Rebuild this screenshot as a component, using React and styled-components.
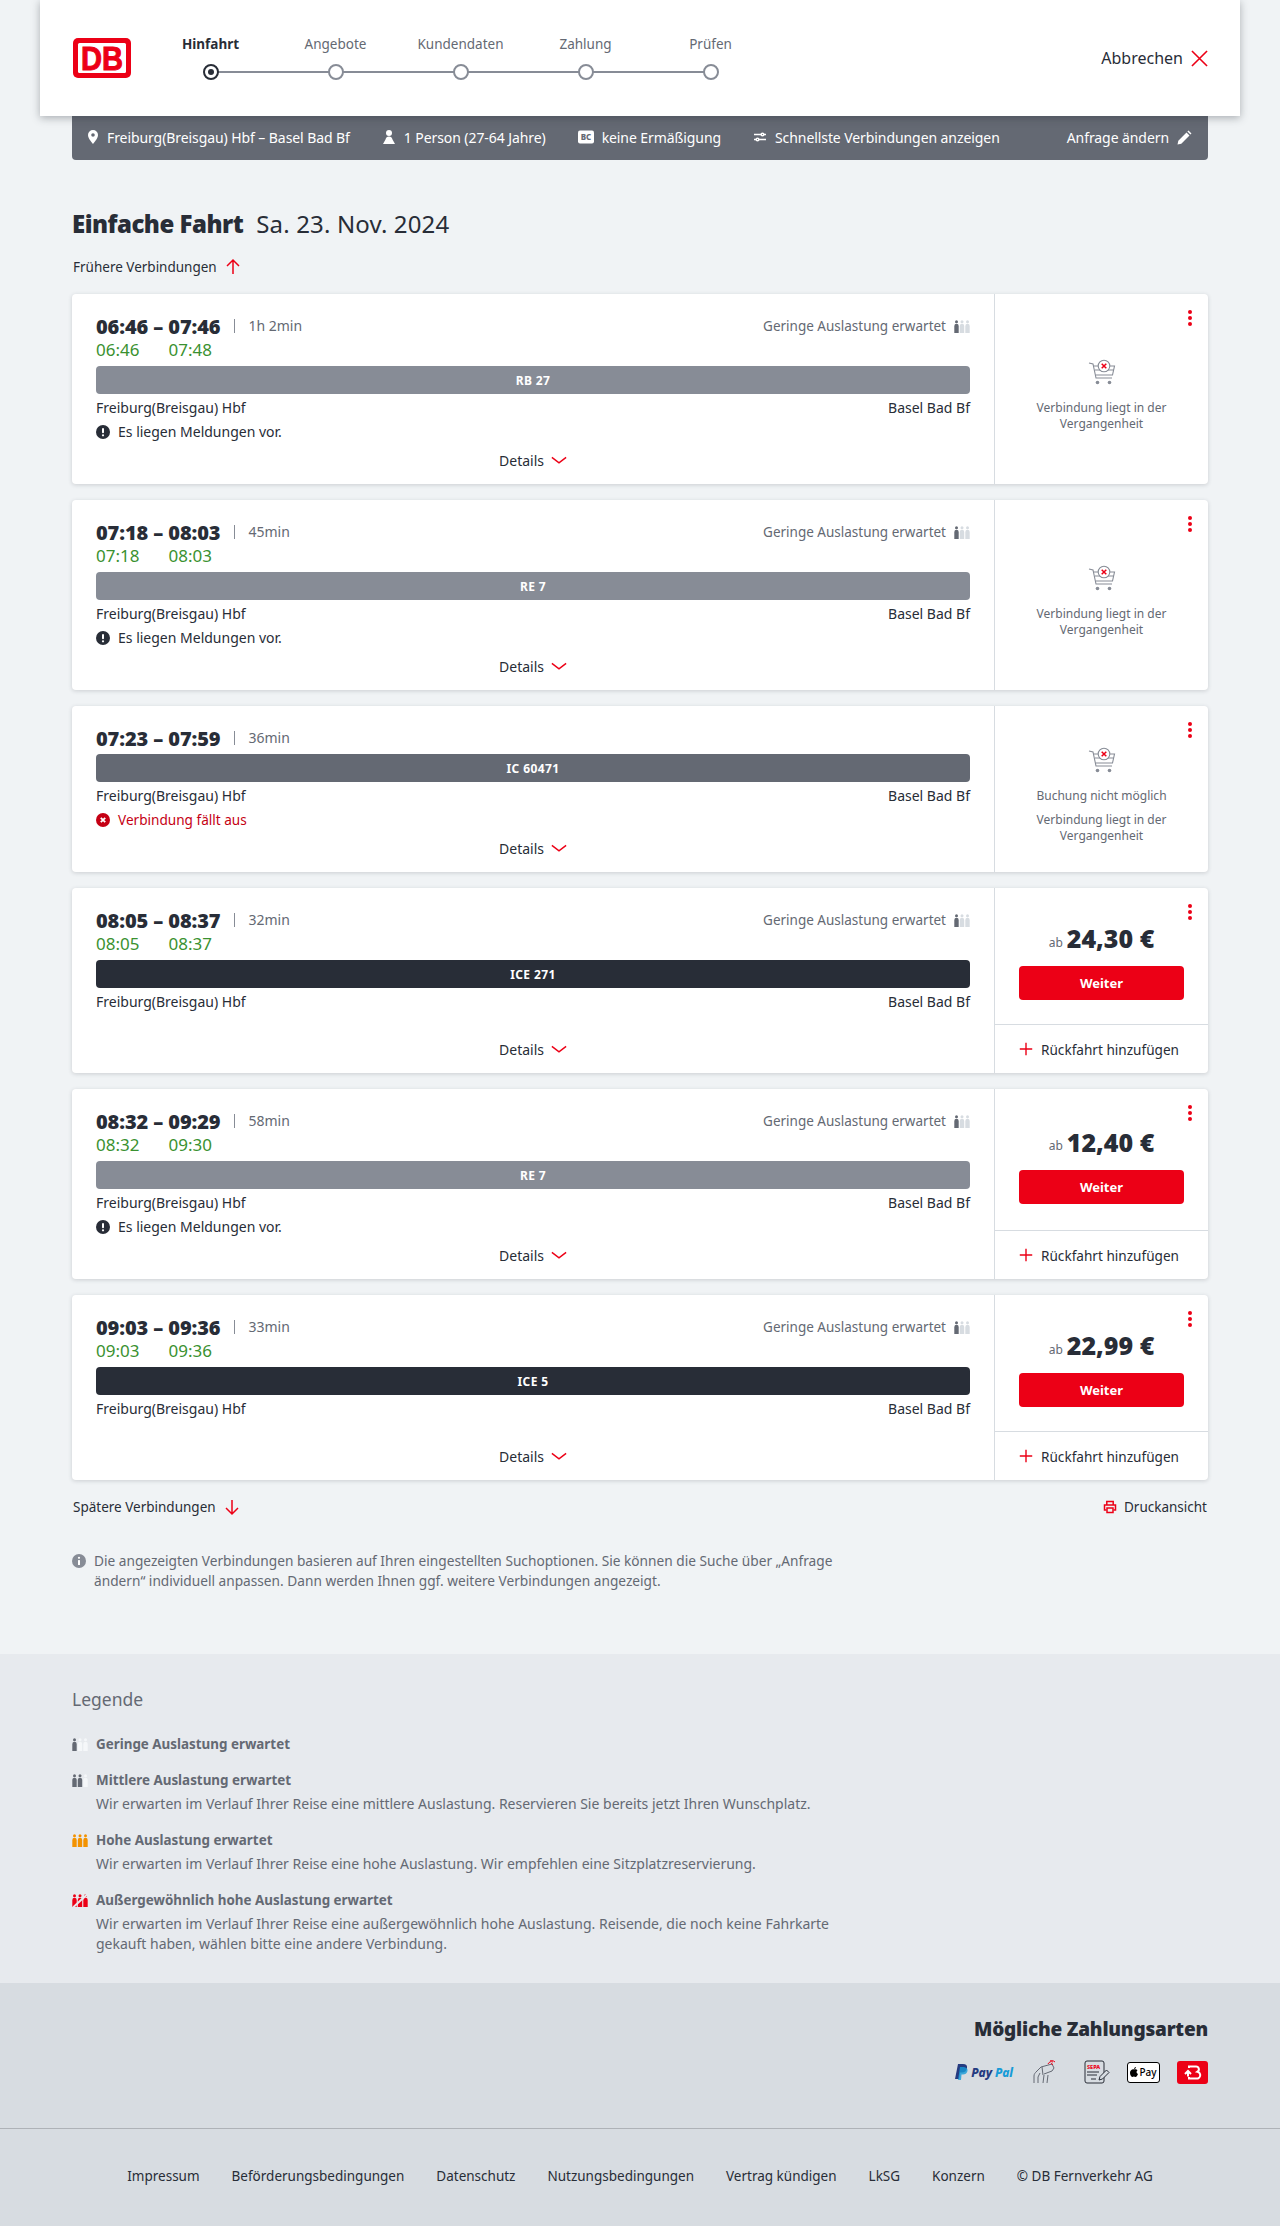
import styled, { createGlobalStyle } from "styled-components";

const colors = {
  page: "#f0f3f5",
  legend: "#e7eaee",
  pay: "#d7dce1",
  text: "#282d37",
  muted: "#646973",
  grey: "#878c96",
  line: "#d7dce1",
  red: "#ec0016",
  darkRed: "#c50014",
  green: "#3a9130",
};

const Global = createGlobalStyle`
  html, body { margin: 0; padding: 0; background: ${colors.page}; }
  body { font-family: "Noto Sans", "Open Sans", sans-serif; color: ${colors.text}; font-size: 14px; }
  * { box-sizing: border-box; }
`;

const Header = styled.header`
  width: 1200px;
  height: 116px;
  margin: 0 auto;
  padding: 0 32px 0 33px;
  background: #fff;
  display: flex;
  align-items: center;
  position: relative;
  z-index: 2;
  box-shadow: 0 2px 8px rgba(40, 45, 55, 0.35);
`;

const Logo = styled.svg`
  width: 58px;
  height: 40px;
  flex: none;
  margin-right: 17px;
`;

const Stepper = styled.ol`
  display: flex;
  list-style: none;
  margin: 0 0 2px;
  padding: 0;
`;

const Step = styled.li`
  width: 125px;
  position: relative;
  display: flex;
  flex-direction: column;
  align-items: center;
  gap: 10px;
  font-size: 13.5px;
  line-height: 20px;
  color: ${({ $active }) => ($active ? colors.text : colors.muted)};
  font-weight: ${({ $active }) => ($active ? 700 : 400)};
  &:not(:last-child)::after {
    content: "";
    position: absolute;
    left: 62px;
    width: 125px;
    top: 37px;
    height: 2px;
    background: ${colors.grey};
  }
`;

const Dot = styled.span`
  width: 16px;
  height: 16px;
  border-radius: 50%;
  background: #fff;
  border: 2px solid ${({ $active }) => ($active ? colors.text : colors.grey)};
  position: relative;
  z-index: 1;
  display: flex;
  align-items: center;
  justify-content: center;
  &::before {
    content: "";
    width: 6px;
    height: 6px;
    border-radius: 50%;
    background: ${({ $active }) => ($active ? colors.text : "transparent")};
  }
`;

const Cancel = styled.div`
  margin-left: auto;
  display: flex;
  align-items: center;
  gap: 8px;
  font-size: 16px;
  color: ${colors.text};
`;

const Wrap = styled.div`
  width: 1136px;
  margin: 0 auto;
`;

const QueryBar = styled.div`
  height: 44px;
  background: ${colors.muted};
  border-radius: 0 0 4px 4px;
  color: #fff;
  padding: 0 16px 2px 15px;
  display: flex;
  align-items: center;
  gap: 32px;
  font-size: 14px;
  letter-spacing: -0.08px;
`;

const QueryItem = styled.span`
  display: flex;
  align-items: center;
  gap: 8px;
  white-space: nowrap;
  &:last-child { margin-left: auto; }
`;

const Heading = styled.h1`
  margin: 48px 0 0;
  font-size: 24px;
  line-height: 32px;
  font-weight: 400;
  display: flex;
  gap: 13px;
  letter-spacing: 0.15px;
  b { font-weight: 900; letter-spacing: -0.5px; }
`;

const MoreRow = styled.div`
  display: flex;
  align-items: center;
  justify-content: space-between;
  height: 24px;
  margin-top: ${({ $top }) => $top}px;
  padding: 0 1px 1px;
  font-size: 13.5px;
`;

const MoreLink = styled.span`
  display: flex;
  align-items: center;
  gap: 7px;
`;

const CardList = styled.div`
  margin-top: 15px;
  display: flex;
  flex-direction: column;
  gap: 16px;
`;

const Card = styled.article`
  display: grid;
  grid-template-columns: 922px 214px;
  background: #fff;
  border-radius: 4px;
  box-shadow: 0 1px 4px rgba(40, 45, 55, 0.18);
`;

const Main = styled.div`
  padding: 20px 24px 11px;
  display: flex;
  flex-direction: column;
`;

const TimeRow = styled.div`
  display: flex;
  align-items: center;
  height: 24px;
  margin-bottom: 1px;
`;

const Times = styled.strong`
  font-size: 20px;
  font-weight: 900;
  letter-spacing: -0.1px;
`;

const Duration = styled.span`
  margin-left: 14px;
  padding-left: 13px;
  font-size: 14px;
  color: ${colors.muted};
  line-height: 14px;
  border-left: 1px solid ${colors.grey};
`;

const Load = styled.span`
  margin-left: auto;
  display: flex;
  align-items: center;
  gap: 8px;
  font-size: 13.5px;
  color: ${colors.muted};
`;

const ActualRow = styled.div`
  height: 22px;
  margin-bottom: 2px;
  display: flex;
  gap: 29px;
  color: ${colors.green};
  font-size: 17px;
  line-height: 22px;
`;

const TrainBar = styled.div`
  height: 28px;
  margin-top: 3px;
  border-radius: 4px;
  background: ${({ $tone }) => $tone};
  color: #fff;
  font-size: 12px;
  font-weight: 700;
  letter-spacing: 0.4px;
  display: flex;
  align-items: center;
  justify-content: center;
`;

const Stations = styled.div`
  margin-top: 2px;
  display: flex;
  justify-content: space-between;
  font-size: 14px;
  line-height: 24px;
`;

const Notice = styled.div`
  display: flex;
  align-items: center;
  gap: 8px;
  font-size: ${({ $alert }) => ($alert ? 13.6 : 14)}px;
  line-height: 24px;
  color: ${({ $alert }) => ($alert ? colors.darkRed : colors.text)};
`;

const Details = styled.div`
  margin-top: auto;
  padding-top: 5px;
  display: flex;
  justify-content: center;
  align-items: center;
  gap: 7px;
  font-size: 14px;
  line-height: 24px;
`;

const Side = styled.div`
  border-left: 1px solid ${colors.line};
  position: relative;
  display: flex;
  flex-direction: column;
`;

const Kebab = styled.span`
  position: absolute;
  right: 16px;
  top: 16px;
  display: flex;
  flex-direction: column;
  gap: 2px;
  i {
    width: 4px;
    height: 4px;
    border-radius: 50%;
    background: ${colors.red};
  }
`;

const Unavailable = styled.div`
  flex: 1;
  padding: 13px 24px 0;
  display: flex;
  flex-direction: column;
  align-items: center;
  justify-content: center;
  text-align: center;
  font-size: 12px;
  line-height: 16px;
  color: ${colors.muted};
`;

const UnavailableNote = styled.p`
  margin: ${({ $top }) => $top}px 0 0;
`;

const Offer = styled.div`
  flex: 1;
  padding: 32px 24px 24px;
  display: flex;
  flex-direction: column;
  justify-content: center;
  align-items: center;
`;

const Price = styled.div`
  height: 36px;
  display: flex;
  align-items: center;
  gap: 4px;
  font-size: 25px;
  font-weight: 900;
  small {
    font-size: 12px;
    font-weight: 400;
    color: ${colors.muted};
    margin-top: 8px;
  }
`;

const Button = styled.button`
  width: 165px;
  height: 34px;
  margin-top: 10px;
  border: 0;
  border-radius: 4px;
  background: ${colors.red};
  color: #fff;
  font: 700 13px "Noto Sans", sans-serif;
`;

const Return = styled.div`
  height: 49px;
  padding-left: 24px;
  border-top: 1px solid ${colors.line};
  display: flex;
  align-items: center;
  gap: 8px;
  font-size: 13.6px;
`;

const Info = styled.p`
  margin: 32px 0 0;
  width: 770px;
  position: relative;
  padding-left: 22px;
  font-size: 13.7px;
  line-height: 20px;
  color: ${colors.muted};
  svg {
    position: absolute;
    left: 0;
    top: 3px;
  }
`;

const Legend = styled.section`
  margin-top: 63px;
  background: ${colors.legend};
  padding: 31px 0 29px;
`;

const LegendTitle = styled.h2`
  margin: 0 0 21px;
  font-size: 17.5px;
  line-height: 28px;
  font-weight: 400;
  color: ${colors.muted};
`;

const LegendItem = styled.div`
  margin-top: 16px;
  display: grid;
  grid-template-columns: 24px 734px;
  row-gap: 4px;
  font-size: 14px;
  line-height: 20px;
  color: ${colors.muted};
  align-items: center;
  b { font-weight: 700; font-size: 13.4px; }
  p { margin: 0; grid-column: 2; }
  &:first-of-type { margin-top: 0; }
`;

const Payment = styled.section`
  background: ${colors.pay};
  padding: 32px 0 40px;
  border-bottom: 1px solid #aeb2b7;
`;

const PaymentTitle = styled.h2`
  margin: 0;
  text-align: right;
  font-size: 19px;
  letter-spacing: -0.2px;
  line-height: 28px;
  font-weight: 900;
`;

const PaymentIcons = styled.div`
  margin-top: 13px;
  height: 32px;
  display: flex;
  justify-content: flex-end;
  align-items: center;
`;

const PaymentIcon = styled.span`
  display: flex;
  margin-left: ${({ $gap }) => $gap}px;
`;

const PayPal = styled.span`
  display: flex;
  align-items: center;
  gap: 3px;
  font-size: 12px;
  font-weight: 800;
  font-style: italic;
  letter-spacing: -0.1px;
  color: #253b80;
  em { color: #179bd7; font-style: inherit; }
`;

const ApplePay = styled.span`
  width: 33px;
  height: 21px;
  border: 1px solid #000;
  border-radius: 3px;
  background: #fff;
  color: #000;
  display: flex;
  align-items: center;
  justify-content: center;
  font-size: 10px;
  font-weight: 500;
  gap: 1px;
`;

const Footer = styled.footer`
  background: ${colors.pay};
  height: 97px;
  padding-bottom: 3px;
  display: flex;
  align-items: center;
  justify-content: center;
  gap: 32px;
  font-size: 13.5px;
`;

// icons

const RedIcon = ({ size = 18, width = 1.5, children }) => (
  <svg width={size} height={size} viewBox="0 0 18 18" fill="none" stroke={colors.red} strokeWidth={width}>
    {children}
  </svg>
);

const ArrowUp = () => (
  <RedIcon>
    <path d="M9 16V2M3 8l6-6 6 6" />
  </RedIcon>
);
const ArrowDown = () => (
  <RedIcon>
    <path d="M9 2v14M3 10l6 6 6-6" />
  </RedIcon>
);
const Chevron = () => (
  <RedIcon size={16} width={1.7}>
    <path d="M1 5l8 6 8-6" />
  </RedIcon>
);
const Plus = () => (
  <RedIcon size={14} width={1.8}>
    <path d="M9 1v16M1 9h16" />
  </RedIcon>
);
const Cross = () => (
  <RedIcon size={17} width={1.7}>
    <path d="M1 1l16 16M17 1L1 17" />
  </RedIcon>
);

const Pin = () => (
  <svg width="12" height="16" viewBox="0 0 12 16" fill="#fff">
    <path fillRule="evenodd" d="M6 1a5 5 0 0 0-5 5c0 3.500 5 9 5 9s5-5.500 5-9a5 5 0 0 0-5-5zm0 3.200a1.800 1.800 0 1 1 0 3.600 1.800 1.800 0 0 1 0-3.600z" />
  </svg>
);
const Person = () => (
  <svg width="14" height="16" viewBox="0 0 14 16" fill="#fff">
    <circle cx="7" cy="4" r="3" />
    <path d="M7 7.500c-2 0-3 1-3.500 3L1 15h12l-2.500-4.500c-.5-2-1.500-3-3.500-3z" />
  </svg>
);
const BahnCard = () => (
  <svg width="16" height="14" viewBox="0 0 16 14">
    <rect width="16" height="13" y="0.500" rx="2" fill="#fff" />
    <text x="8" y="10" fontSize="8" fontWeight="800" textAnchor="middle" fill={colors.muted}>BC</text>
  </svg>
);
const Sliders = () => (
  <svg width="14" height="12" viewBox="0 0 14 12" fill="none" stroke="#fff" strokeWidth="1.500">
    <path d="M1 3.500h7M11 3.500h2M1 8.500h2M6 8.500h7" />
    <circle cx="9.500" cy="3.500" r="1.300" />
    <circle cx="4.500" cy="8.500" r="1.300" />
  </svg>
);
const Pencil = () => (
  <svg width="15" height="15" viewBox="0 0 15 15" fill="#fff">
    <path d="M0.500 14.500l.8-3.800 8.200-8.200 3 3-8.200 8.200zM10.400 1.600l1.100-1.100 3 3-1.100 1.100z" />
  </svg>
);
const AlertIcon = () => (
  <svg width="14" height="14" viewBox="0 0 14 14">
    <circle cx="7" cy="7" r="7" fill={colors.text} />
    <rect x="6" y="3" width="2" height="5.200" rx="1" fill="#fff" />
    <circle cx="7" cy="10.300" r="1.100" fill="#fff" />
  </svg>
);
const CancelledIcon = () => (
  <svg width="14" height="14" viewBox="0 0 14 14">
    <circle cx="7" cy="7" r="7" fill={colors.darkRed} />
    <path d="M4.800 4.800l4.400 4.400M9.200 4.800L4.800 9.200" stroke="#fff" strokeWidth="1.800" />
  </svg>
);
const InfoIcon = () => (
  <svg width="14" height="14" viewBox="0 0 14 14">
    <circle cx="7" cy="7" r="7" fill={colors.grey} />
    <circle cx="7" cy="3.800" r="1.100" fill="#fff" />
    <rect x="6" y="6" width="2" height="5" rx="0.500" fill="#fff" />
  </svg>
);
const Printer = () => (
  <svg width="14" height="14" viewBox="0 0 14 14" fill="none" stroke={colors.red} strokeWidth="1.500">
    <path d="M3.800 5V1.500h6.400V5" />
    <path d="M3.500 10H1.500V5h11v5h-2" />
    <path d="M4 8h6v4.500H4z" />
  </svg>
);

const Cart = () => (
  <svg width="28" height="26" viewBox="0 0 28 26" fill="none" stroke={colors.grey} strokeWidth="1.100">
    <path d="M1 4l4 1 3 14h16" />
    <path d="M5.500 7h21l-2 9H7.500M7 11h18.500" />
    <circle cx="9.500" cy="23.500" r="1.800" fill={colors.grey} stroke="none" />
    <circle cx="21.500" cy="23.500" r="1.800" fill={colors.grey} stroke="none" />
    <circle cx="16" cy="7" r="5.800" fill="#fff" />
    <path d="M13.700 4.700l4.600 4.600M18.300 4.700l-4.600 4.600" stroke={colors.red} strokeWidth="1.500" />
  </svg>
);

const LoadIcon = ({ level = 1, on = colors.muted, off = colors.line, slash }) => (
  <svg width="16" height="13" viewBox="0 0 16 13">
    {[0, 1, 2].map((i) => (
      <g key={i} fill={i < level ? on : off}>
        <circle cx={2.500 + i * 5.500} cy="1.700" r="1.500" />
        <path d={`M${0.300 + i * 5.500} 6a2.200 2.200 0 0 1 4.400 0v7h-4.400z`} />
      </g>
    ))}
    {slash && <path d="M1 13.500L15.500 0" stroke={slash} strokeWidth="2" />}
  </svg>
);

const DbLogo = () => (
  <Logo viewBox="0 0 58 40">
    <rect width="58" height="40" rx="5" fill={colors.red} />
    <rect x="5" y="5" width="48" height="30" rx="1.500" fill="#fff" />
    <text x="29" y="32" fontFamily="Liberation Sans" fontSize="34" fontWeight="700" textAnchor="middle" textLength="42" lengthAdjust="spacingAndGlyphs" fill={colors.red} stroke={colors.red} strokeWidth="1">DB</text>
  </Logo>
);

const BonusIcon = () => (
  <svg width="31" height="23" viewBox="0 0 31 23">
    <rect width="31" height="23" rx="3" fill={colors.red} />
    <path d="M12 7V5.500h7a2.800 2.800 0 0 1 1.500 5.200A3 3 0 0 1 19 17.500h-7V16M8 13l3-3 3 3M11 10.500v5" fill="none" stroke="#fff" strokeWidth="2" />
  </svg>
);

const SepaIcon = () => (
  <svg width="26" height="24" viewBox="0 0 26 24" fill="none" stroke={colors.text} strokeWidth="1">
    <rect x="1" y="1" width="19" height="22" rx="2" />
    <text x="3" y="8.500" fontSize="5.500" fontWeight="800" fill={colors.red} stroke="none">SEPA</text>
    <path d="M3 12h12M3 15h10M7 19h5" />
    <path d="M15 20l1-3.500 6.500-6.500 2.500 2.500-6.500 6.500z" fill={colors.pay} />
  </svg>
);

const ContactlessIcon = () => (
  <svg width="23" height="24" viewBox="0 0 23 24" fill="none" stroke={colors.muted} strokeWidth="1">
    <path d="M1 23v-7c0-2 1-3 3-5l4-4 11-3 2 4-2 3-8 3" />
    <path d="M9 7l1 8M5 23v-6l2-4M10 23l1-8M14 23l1-8" />
    <path d="M15 4c1-2 3-3 5-2M17 1c2-1 3-.5 5 1M18 3.500l2 1" stroke={colors.red} />
  </svg>
);

const connections = [
  { times: "06:46 – 07:46", duration: "1h 2min", actual: ["06:46", "07:48"], train: "RB 27", tone: colors.grey, notice: "Es liegen Meldungen vor." },
  { times: "07:18 – 08:03", duration: "45min", actual: ["07:18", "08:03"], train: "RE 7", tone: colors.grey, notice: "Es liegen Meldungen vor." },
  { times: "07:23 – 07:59", duration: "36min", train: "IC 60471", tone: colors.muted, cancelled: true },
  { times: "08:05 – 08:37", duration: "32min", actual: ["08:05", "08:37"], train: "ICE 271", tone: colors.text, price: "24,30 €" },
  { times: "08:32 – 09:29", duration: "58min", actual: ["08:32", "09:30"], train: "RE 7", tone: colors.grey, notice: "Es liegen Meldungen vor.", price: "12,40 €" },
  { times: "09:03 – 09:36", duration: "33min", actual: ["09:03", "09:36"], train: "ICE 5", tone: colors.text, price: "22,99 €" },
];

const footerLinks = ["Impressum", "Beförderungsbedingungen", "Datenschutz", "Nutzungsbedingungen", "Vertrag kündigen", "LkSG", "Konzern", "© DB Fernverkehr AG"];

const steps = ["Hinfahrt", "Angebote", "Kundendaten", "Zahlung", "Prüfen"];

const Connection = ({ times, duration, actual, train, tone, notice, cancelled, price }) => (
  <Card>
    <Main>
      <TimeRow>
        <Times>{times}</Times>
        <Duration>{duration}</Duration>
        {!cancelled && (
          <Load>
            Geringe Auslastung erwartet
            <LoadIcon level={1} />
          </Load>
        )}
      </TimeRow>
      {actual && (
        <ActualRow>
          <span>{actual[0]}</span>
          <span>{actual[1]}</span>
        </ActualRow>
      )}
      <TrainBar $tone={tone}>{train}</TrainBar>
      <Stations>
        <span>Freiburg(Breisgau) Hbf</span>
        <span>Basel Bad Bf</span>
      </Stations>
      {notice && (
        <Notice>
          <AlertIcon />
          {notice}
        </Notice>
      )}
      {cancelled && (
        <Notice $alert>
          <CancelledIcon />
          Verbindung fällt aus
        </Notice>
      )}
      <Details>
        Details
        <Chevron />
      </Details>
    </Main>
    <Side>
      <Kebab>
        <i />
        <i />
        <i />
      </Kebab>
      {price ? (
        <>
          <Offer>
            <Price>
              <small>ab</small>
              {price}
            </Price>
            <Button>Weiter</Button>
          </Offer>
          <Return>
            <Plus />
            Rückfahrt hinzufügen
          </Return>
        </>
      ) : (
        <Unavailable>
          <Cart />
          {cancelled && <UnavailableNote $top={15}>Buchung nicht möglich</UnavailableNote>}
          <UnavailableNote $top={cancelled ? 8 : 15}>Verbindung liegt in der Vergangenheit</UnavailableNote>
        </Unavailable>
      )}
    </Side>
  </Card>
);

export default function App() {
  return (
    <>
      <Global />
      <Header>
        <DbLogo />
        <Stepper>
          {steps.map((step, i) => (
            <Step key={step} $active={i === 0}>
              {step}
              <Dot $active={i === 0} />
            </Step>
          ))}
        </Stepper>
        <Cancel>
          Abbrechen
          <Cross />
        </Cancel>
      </Header>
      <Wrap>
        <QueryBar>
          <QueryItem><Pin />Freiburg(Breisgau) Hbf – Basel Bad Bf</QueryItem>
          <QueryItem><Person />1 Person (27-64 Jahre)</QueryItem>
          <QueryItem><BahnCard />keine Ermäßigung</QueryItem>
          <QueryItem><Sliders />Schnellste Verbindungen anzeigen</QueryItem>
          <QueryItem>Anfrage ändern<Pencil /></QueryItem>
        </QueryBar>
        <Heading>
          <b>Einfache Fahrt</b>
          <span>Sa. 23. Nov. 2024</span>
        </Heading>
        <MoreRow $top={15}>
          <MoreLink>Frühere Verbindungen<ArrowUp /></MoreLink>
        </MoreRow>
        <CardList>
          {connections.map((c) => (
            <Connection key={c.times} {...c} />
          ))}
        </CardList>
        <MoreRow $top={15}>
          <MoreLink>Spätere Verbindungen<ArrowDown /></MoreLink>
          <MoreLink><Printer />Druckansicht</MoreLink>
        </MoreRow>
        <Info>
          <InfoIcon />
          Die angezeigten Verbindungen basieren auf Ihren eingestellten Suchoptionen. Sie können die Suche über „Anfrage ändern“ individuell anpassen. Dann werden Ihnen ggf. weitere Verbindungen angezeigt.
        </Info>
      </Wrap>
      <Legend>
        <Wrap>
          <LegendTitle>Legende</LegendTitle>
          <LegendItem>
            <LoadIcon level={1} off="#f5f7f9" />
            <b>Geringe Auslastung erwartet</b>
          </LegendItem>
          <LegendItem>
            <LoadIcon level={2} off="#f5f7f9" />
            <b>Mittlere Auslastung erwartet</b>
            <p>Wir erwarten im Verlauf Ihrer Reise eine mittlere Auslastung. Reservieren Sie bereits jetzt Ihren Wunschplatz.</p>
          </LegendItem>
          <LegendItem>
            <LoadIcon level={3} on="#f39200" />
            <b>Hohe Auslastung erwartet</b>
            <p>Wir erwarten im Verlauf Ihrer Reise eine hohe Auslastung. Wir empfehlen eine Sitzplatzreservierung.</p>
          </LegendItem>
          <LegendItem>
            <LoadIcon level={3} on={colors.red} slash={colors.legend} />
            <b>Außergewöhnlich hohe Auslastung erwartet</b>
            <p>Wir erwarten im Verlauf Ihrer Reise eine außergewöhnlich hohe Auslastung. Reisende, die noch keine Fahrkarte gekauft haben, wählen bitte eine andere Verbindung.</p>
          </LegendItem>
        </Wrap>
      </Legend>
      <Payment>
        <Wrap>
          <PaymentTitle>Mögliche Zahlungsarten</PaymentTitle>
          <PaymentIcons>
            <PayPal>
              <svg width="13" height="16" viewBox="0 0 13 16">
                <path d="M3 0h5c3 0 4.500 1.500 4 4-.5 3-2.500 4.500-5 4.500H5L4 15H0z" fill="#253b80" />
                <path d="M5 3h3c2 0 5 1 4.500 4-.5 2.500-2.500 3.500-4.500 3.500H6.500L6 16H3z" fill="#179bd7" opacity="0.800" />
              </svg>
              Pay<em>Pal</em>
            </PayPal>
            <PaymentIcon $gap={20}><ContactlessIcon /></PaymentIcon>
            <PaymentIcon $gap={28}><SepaIcon /></PaymentIcon>
            <PaymentIcon $gap={17}>
              <ApplePay>
                <svg width="8" height="10" viewBox="0 0 8 10" fill="#000">
                  <path d="M4 2.500C4.800 2 6.500 2 7.500 3.300 6 4.300 6.300 6.500 8 7c-.5 1.500-1.500 3-2.500 3-.7 0-1-.4-1.600-.4-.6 0-1 .4-1.600.4C1 10 0 7.500 0 5.800 0 3.500 2.500 1.800 4 2.500zM4 2c0-1 .8-2 2-2 0 1.200-.9 2-2 2z" />
                </svg>
                Pay
              </ApplePay>
            </PaymentIcon>
            <PaymentIcon $gap={17}><BonusIcon /></PaymentIcon>
          </PaymentIcons>
        </Wrap>
      </Payment>
      <Footer>
        {footerLinks.map((l) => (
          <span key={l}>{l}</span>
        ))}
      </Footer>
    </>
  );
}
